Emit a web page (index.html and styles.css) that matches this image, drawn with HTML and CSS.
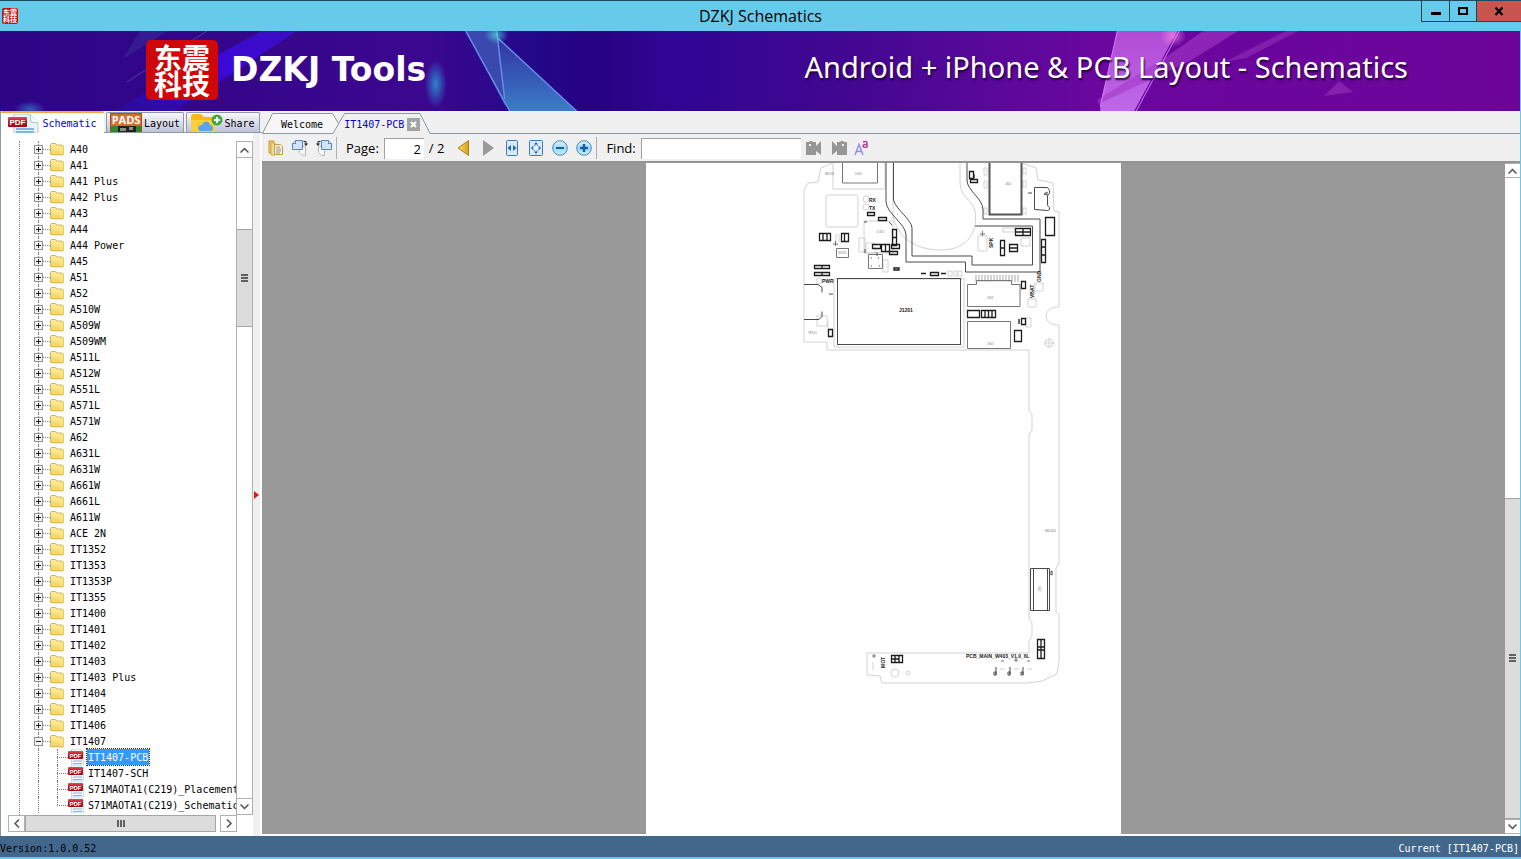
FILE: index.html
```html
<!DOCTYPE html>
<html lang="en">
<head>
<meta charset="utf-8">
<title>DZKJ Schematics</title>
<link rel="stylesheet" href="styles.css">
</head>
<body>
<svg class="defs" aria-hidden="true">
  <defs>
    <linearGradient id="gFolder" x1="0" y1="0" x2="0" y2="1"><stop offset="0" stop-color="#fff3a8"/><stop offset="1" stop-color="#f5cf5c"/></linearGradient>
    <linearGradient id="gBlue" x1="0" y1="0" x2="0" y2="1"><stop offset="0" stop-color="#e4f5fc"/><stop offset=".5" stop-color="#9bd9f5"/><stop offset="1" stop-color="#c5effc"/></linearGradient>
    <linearGradient id="gGold" x1="0" y1="0" x2="1" y2="0"><stop offset="0" stop-color="#f8e060"/><stop offset="1" stop-color="#d8a020"/></linearGradient>
    <linearGradient id="gRed" x1="0" y1="0" x2="0" y2="1"><stop offset="0" stop-color="#d8505a"/><stop offset=".5" stop-color="#b8101c"/><stop offset="1" stop-color="#a00814"/></linearGradient>
  </defs>
  <symbol id="folder" viewBox="0 0 14 13"><path d="M.5 11.5V1.5l1-1h4l1 1.500h5.500l1 1v9z" fill="url(#gFolder)" stroke="#d9b04a"/><path d="M10.500 2.500h3v9h-3" fill="#fbe48a" stroke="#e0b955" stroke-width=".6"/></symbol>
  <symbol id="pdf" viewBox="0 0 16 16"><path d="M3.500 0h9l3 3v13h-12z" fill="#f2f8fd" stroke="#b5cfe4" stroke-width=".8"/><path d="M5 12h9M5 14.500h9" stroke="#7fbbe6" stroke-width="1.200"/><rect x="0" y="2" width="15" height="8" rx="1" fill="url(#gRed)"/><text x="7.500" y="8.500" text-anchor="middle" class="pdf-text">PDF</text></symbol>
</svg>

<header class="titlebar">
  <div class="app-icon"><span>东震</span><span>科技</span></div>
  <h1 class="title">DZKJ Schematics</h1>
  <div class="win-buttons">
    <button class="win-btn win-min" aria-label="Minimize"><svg width="10" height="10"><rect y="6" width="10" height="3"/></svg></button>
    <button class="win-btn win-max" aria-label="Maximize"><svg width="10" height="10"><path d="M1 2h8v6h-8z" fill="none" stroke="#000" stroke-width="2"/></svg></button>
    <button class="win-btn win-close" aria-label="Close"><svg width="10" height="10"><path d="M1.500 1.500l7 7.500M8.500 1.500l-7 7.500" stroke="#000" stroke-width="2.200"/></svg></button>
  </div>
</header>

<section class="banner">
  <svg class="banner-art" viewBox="0 31 1521 80" preserveAspectRatio="none" aria-hidden="true">
    <defs>
      <linearGradient id="bBase"><stop offset="0" stop-color="#2d0585"/><stop offset=".28" stop-color="#3b078f"/><stop offset=".35" stop-color="#22088a"/><stop offset=".39" stop-color="#270281"/><stop offset=".45" stop-color="#310594"/><stop offset=".56" stop-color="#420791"/><stop offset=".65" stop-color="#59089a"/><stop offset=".72" stop-color="#6a079f"/><stop offset="1" stop-color="#6c0499"/></linearGradient>
      <linearGradient id="bStripe" x1="0" y1="1" x2="1" y2="0"><stop offset="0" stop-color="#2a0a99"/><stop offset=".6" stop-color="#3c09d8"/><stop offset="1" stop-color="#3d0cc0"/></linearGradient>
      <linearGradient id="bShard" x1="0" y1="0" x2="0" y2="1"><stop offset="0" stop-color="#31309f"/><stop offset="1" stop-color="#3a7cc8"/></linearGradient>
      <linearGradient id="bPink" x1="0" y1="0" x2="0" y2="1"><stop offset="0" stop-color="#b24bd4"/><stop offset="1" stop-color="#be68ea"/></linearGradient>
      <radialGradient id="bGlow"><stop offset="0" stop-color="#2f83cc"/><stop offset="1" stop-color="#2f83cc" stop-opacity="0"/></radialGradient>
      <radialGradient id="bSpark"><stop offset="0" stop-color="#51dfe0"/><stop offset="1" stop-color="#51dfe0" stop-opacity="0"/></radialGradient>
      <radialGradient id="bSpark2"><stop offset="0" stop-color="#f78be8"/><stop offset="1" stop-color="#f78be8" stop-opacity="0"/></radialGradient>
    </defs>
    <rect y="31" width="1521" height="80" fill="url(#bBase)"/>
    <path d="M262 31h35L175 111h-62z" fill="url(#bStripe)"/>
    <path d="M140 31h28l-45 28z" fill="#38309c" opacity=".5"/>
    <path d="M207 31L127 82" stroke="#5460be" opacity=".6"/>
    <ellipse cx="30" cy="109" rx="16" ry="8" fill="url(#bGlow)" opacity=".7"/>
    <ellipse cx="436" cy="84" rx="11" ry="24" fill="url(#bGlow)"/>
    <path d="M466 31h31l9 76z" fill="#3b48ae"/>
    <path d="M497 36l80 75h-67l-5-10z" fill="url(#bShard)"/>
    <path d="M466 31l44 80M497 31l8 68M497 37l80 74" fill="none" stroke="#668be8" stroke-width="1.500"/>
    <ellipse cx="497" cy="35" rx="12" ry="9" fill="url(#bSpark)" opacity=".7"/>
    <path d="M650 31l60 0 0 80-60 0z" fill="#310599" opacity=".3"/>
    <path d="M1118 31h60l-43 80h-34v-7z" fill="url(#bPink)"/>
    <path d="M1204 31h35l-50 31-90 42-1-4 70-44z" fill="#a33ac6" opacity=".6"/>
    <path d="M1287 31h12l-52 27-22 4z" fill="#8c2ab1" opacity=".7"/>
    <path d="M1340 81l-15 15 29-4z" fill="#8420ac"/>
    <path d="M1118 31l-17 76M1180 31l-43 80" stroke="#d17af5" fill="none"/>
    <ellipse cx="1174" cy="36" rx="13" ry="11" fill="url(#bSpark2)" opacity=".7"/>
  </svg>
  <div class="logo"><span>东震</span><span>科技</span></div>
  <span class="brand">DZKJ Tools</span>
  <span class="tagline">Android + iPhone &amp; PCB Layout - Schematics</span>
</section>

<main class="main">
  <aside class="side">
    <nav class="side-tabs">
      <button class="side-tab is-active"><svg width="32" height="19" viewBox="0 0 32 19"><path d="M6 0h16l8 9v10H6z" fill="#edf4f9" stroke="#b9c9d6"/><path d="M22 0l1 8 7 1" fill="#fff" stroke="#a9bccb"/><path d="M8 15h18M8 18h18" stroke="#7ab8e4" stroke-width="2"/><rect x="0" y="3" width="19" height="10" rx="1" fill="url(#gRed)"/><text x="9.500" y="11" text-anchor="middle" class="pdf-tab-text">PDF</text></svg><span>Schematic</span></button>
      <button class="side-tab"><svg width="32" height="19" viewBox="0 0 32 19"><rect x=".5" y=".5" width="31" height="19" fill="#d4702a" stroke="#a3501c"/><path d="M1 13h30v6H1z" fill="#2c8a2c"/><rect x="8" y="13" width="18" height="6" fill="#222"/><path d="M10 15h6v3h-6zM19 14h4v3h-4z" fill="#8a918a"/><text x="16" y="11" text-anchor="middle" class="pads-text">PADS</text></svg><span>Layout</span></button>
      <button class="side-tab tab-share"><svg width="32" height="18" viewBox="0 0 32 18"><path d="M0 18V3q0-3 3-3h7l3 3h8q3 0 3 3v12z" fill="#fbb917"/><path d="M0 6h24v12H0z" fill="#ffce3c"/><path d="M10 17q-3 0-3-3t4-3q2-5 6-3 2 1 2 3 3 0 3 3t-3 3z" fill="#58a5e8"/><circle cx="26" cy="6" r="5.500" fill="#42a843"/><path d="M26 3v6M23 6h6" stroke="#fff" stroke-width="2"/></svg><span>Share</span></button>
    </nav>
    <div class="side-body">
      <div class="tree-wrap">
        <ul class="tree" id="tree"></ul>
        <div class="vbar">
          <button class="sb-btn" aria-label="Scroll up"><svg width="9" height="6"><path d="M.5 5.500l4-4 4 4"/></svg></button>
          <div class="track"><div class="pre"></div><div class="thumb"><i class="grip"></i></div><div class="post"></div></div>
          <button class="sb-btn" aria-label="Scroll down"><svg width="9" height="6"><path d="M.5 .500l4 4 4-4"/></svg></button>
        </div>
      </div>
      <div class="hbar">
        <button class="sb-btn" aria-label="Scroll left"><svg width="6" height="9"><path d="M5 .500l-4 4 4 4"/></svg></button>
        <div class="hthumb"><i class="grip grip-h"></i></div>
        <button class="sb-btn" aria-label="Scroll right"><svg width="6" height="9"><path d="M1 .500l4 4-4 4"/></svg></button>
      </div>
    </div>
    <div class="splitter"><svg width="5" height="8"><path d="M0 0l5 4-5 4z" fill="#d81c1c"/></svg></div>
  </aside>

  <section class="doc">
    <nav class="doc-tabs">
      <svg class="tab-lines" height="24" aria-hidden="true"><path d="M10.500 2.500h60l6 10-5 10H.5z" fill="#f6f6f6"/><path d="M0 23.500L10.500 2.500H70.500l6 10M0 22.500h71L82.500 2.500H158l10 20H4000" fill="none" stroke="#8b9aa5"/></svg>
      <button class="doc-tab">Welcome</button>
      <button class="doc-tab is-current">IT1407-PCB</button>
      <button class="tab-close" aria-label="Close tab"><svg width="13" height="13"><path d="M4 4l5 5M9 4l-5 5" stroke="#fff" stroke-width="2"/></svg></button>
    </nav>
    <div class="toolbar">
      <button class="tool" aria-label="Open"><svg width="16" height="16"><path d="M1 1h5v12H1z" fill="#f2c968" stroke="#c59a3a"/><path d="M3 3h4v12H3z" fill="#f8db90" stroke="#d2a645"/><path d="M6.500 4.500h6l2 2v8h-8z" fill="#fff8e3" stroke="#c59a3a"/><path d="M8 7h4M8 9h5M8 11h5M8 13h4" stroke="#8b8f98"/></svg></button>
      <button class="tool" aria-label="Rotate right"><svg width="16" height="16"><path d="M7.500 6.500h6v9h-3l-3-3z" fill="#fff" stroke="#b5b5b5"/><path d="M3.500.5h7v9H.5v-6z" fill="#cfe5fa" stroke="#5583bd"/><path d="M.5 3.500h3v-3" fill="#fff" stroke="#5583bd"/><path d="M11.500 1.500H14v3" fill="none" stroke="#222"/><path d="M12 3.500h4L14 6z" fill="#222"/></svg></button>
      <button class="tool" aria-label="Rotate left"><svg width="16" height="16"><path d="M2.500 6.500h6v9h-3l-3-3z" fill="#fff" stroke="#b5b5b5"/><path d="M5.500.5h7l3 3v6h-10z" fill="#cfe5fa" stroke="#5583bd"/><path d="M12.500.5v3h3" fill="#fff" stroke="#5583bd"/><path d="M4.500 1.500H2v3" fill="none" stroke="#222"/><path d="M0 3.500h4L2 6z" fill="#222"/></svg></button>
      <span class="sep"></span>
      <label class="tb-label" for="page">Page:</label>
      <input class="field page-field" id="page" value="2">
      <span class="page-total">/ 2</span>
      <button class="tool" aria-label="Previous page"><svg width="16" height="16"><path d="M12.500 .5v15L2 8z" fill="url(#gGold)" stroke="#b07f18"/></svg></button>
      <button class="tool" aria-label="Next page"><svg width="16" height="16"><path d="M3 0v16l11-8z" fill="#999"/></svg></button>
      <button class="tool" aria-label="Fit width"><svg width="16" height="16"><rect x="2.500" y=".5" width="11" height="15" rx="1" fill="#d7eafb" stroke="#4079b5"/><path d="M7 5v6L3.500 8zM9 5v6l3.500-3z" fill="#1f6bad"/></svg></button>
      <button class="tool" aria-label="Fit page"><svg width="16" height="16"><rect x="1.500" y=".5" width="13" height="15" rx="1" fill="#d7eafb" stroke="#4079b5"/><path d="M8 2l2 2.500H6zM8 14l2-2.500H6zM3 8l2-2v4zM13 8l-2-2v4z" fill="#1f6bad"/><circle cx="8" cy="8" r="3" fill="#e9f5fe" stroke="#4a8ac6" stroke-dasharray="2 1"/></svg></button>
      <button class="tool" aria-label="Zoom out"><svg width="16" height="16"><circle cx="8" cy="8" r="7.300" fill="url(#gBlue)" stroke="#4d86bf"/><path d="M4 8h8" stroke="#155fa0" stroke-width="2"/></svg></button>
      <button class="tool" aria-label="Zoom in"><svg width="16" height="16"><circle cx="8" cy="8" r="7.300" fill="url(#gBlue)" stroke="#4d86bf"/><path d="M4 8h8M8 4v8" stroke="#155fa0" stroke-width="2.400"/></svg></button>
      <span class="sep"></span>
      <label class="tb-label" for="find">Find:</label>
      <input class="field find-field" id="find">
      <button class="tool tool-find" aria-label="Find previous"><svg width="16" height="16"><path d="M0 2h3l1-1h2l1 1h3v4l5-5v14l-5-4v4H0z" fill="#969696"/><path d="M3 4h2v2H3z" fill="#eee"/></svg></button>
      <button class="tool tool-find" aria-label="Find next"><svg width="16" height="16"><path d="M16 2h-3l-1-1h-2l-1 1H6v4L1 1v14l5-4v4h10z" fill="#969696"/><path d="M11 4h2v2h-2z" fill="#eee"/></svg></button>
      <button class="tool tool-case" aria-label="Match case"><svg width="16" height="16"><path d="M1 15L5 4.500 9 15M2.500 11.500h5" fill="none" stroke="#8f8af2" stroke-width="1.400"/><path d="M9 2q4-1.500 4 1v4.500M13 4.500q-4-.5-4 1.500t4 1" fill="none" stroke="#b83c9c" stroke-width="1.500"/></svg></button>
    </div>
    <div class="viewer">
      <div class="canvas">
        <div class="sheet">
          <svg class="pcb" width="475" height="671" viewBox="646 163 475 671">
            <g class="faint">
              <path d="M833 163l-12 5-3 14-10 1-4 7v152h23v8h202v61l3 3v17l-3 3v185l3 4v13l-3 5v12H867v22l13 1 2 7h145l15-2 15-7 2-13v-47l-3-2v-44l3-5V325c-17 1-17-19 0-18v-95l-5-1-1-28-15-3-2-12-14-5"/>
              <path d="M833 163v26h52v-26M893 163v52c3 22 23 35 47 35s32-12 35-25c4-30-15-20-15-45v-17"/>
              <rect x="826" y="195" width="32" height="32" rx="2"/><path d="M834 279v68h130v-69M834 279h130"/>
              <circle cx="866" cy="199" r="3"/><circle cx="866" cy="207" r="3"/><circle cx="819" cy="281" r="3"/>
              <path d="M864 221h29v32h-29zM859 238h6v14h-6zM866 243h9v10h-9zM883 260h5v12h-5zM817 316h10v10h-10zM828 321v12"/>
              <path d="M984 168h3v7h-3zM984 181h3v7h-3zM984 208h3v6h-3zM1023 168h3v6h-3zM1023 181h3v6h-3zM1023 208h3v6h-3z"/>
              <path d="M978 236h9v15h-9zM1003 228h12v4h-12zM1021 238h9v8h-9zM1035 283h8v8h-8zM1028 299h8v8h-8zM1026 318h5v9h-5z"/>
              <circle cx="1049" cy="343" r="4"/><path d="M1044 343h11M1049 338v10"/>
              <circle cx="895" cy="673" r="4"/><circle cx="908" cy="673" r="2"/><path d="M873 662v8M1000 669h5M1014 669h5M1027 669h5"/>
              <path d="M948 271h4v5h-4zM954 271h3v5h-3zM958 271h4v5h-4zM836 234v8M839 234v8"/>
              <path d="M975 277h45M975 280h45" stroke-width="4" stroke-dasharray="2 1"/>
            </g>
            <g class="mid">
              <path d="M842.500 160v23h35v-23M836.500 248.500h12v9h-12zM868.500 254.500h14v14h-14z"/>
              <path d="M989.500 160v54.500h32V160" class="heavy"/>
              <path d="M967.500 306.500v-22h9v-4h35v4h8.500v22zM967.500 321.500h43v27h-43z"/>
              <path d="M833 244h5M835.500 241v5M980 234h5M982.500 231v5M872 656h4M874 654v4M1001 661h3M1014 660h4M1016 658v4M1027 661h3"/>
            </g>
            <g class="dark">
              <path d="M1034.500 187.500h13l2 3v3l-2 2v10l2 2v2l-2 1-13-1zM1044 194l3-2v3z"/>
              <path d="M886 163v39c1 12 20 22 20 33v27h59.500v10H1040v-53h-57v-9c0-12-16-19-16-30v-17"/>
              <path d="M893.500 163v37c2 9 18.500 20 18.500 28v28h60v9h60.500v-39H975"/>
              <rect x="837.500" y="278.500" width="123" height="66"/>
              <path d="M804 284.500h14l4 3v5M804 319.500h15l3-3v-5M829 294h4M1028 193h4"/>
              <path d="M1030.500 568.500h19v42h-19zM1033.500 568v42M1047.500 568v42"/>
              <path d="M1052 571v4l-3-2zM996 667v8M1010 667v8M1023 667v8M994 672h2v3h-2zM1008 672h2v3h-2zM1021 672h2v3h-2z"/>
              <path d="M864 222h3M889 222l3 3M865 249v4M877 256v-4M871 258h1M878 258h1M871 266h1M879 266h1"/>
            </g>
            <g class="part">
              <path d="M819.500 233.500h11v7h-11zM823 233v8M827 233v8M841.500 233.500h7v8h-7zM844.500 233v8"/>
              <path d="M867.500 212.500h7v3h-7zM878.500 217.500h8v3h-8zM892.500 229.500h4v16h-4zM892 237.500h5M872.500 244.500h8v4h-8zM881.500 244.500h8v7h-8zM885.500 244v8M891.500 244.500h8v4h-8zM889.500 251.500h8v3h-8z"/>
              <path d="M814.500 265.500h15v3h-15zM822 265v4M814.500 272.500h15v3h-15zM822 272v4M828.500 329.500h4v7h-4z"/>
              <path d="M894 268h5v2h-5zM921 273.500h5M930.500 272.500h8v3h-8zM941 273.500h5"/>
              <path d="M969.500 171.500h4v7h-4zM970.500 179.500h7v3h-7zM974 174v4"/>
              <path d="M1015.500 228.500h15v7h-15zM1015 232h16M1023 228v8M1000.500 240.500h4v15h-4zM1000 248h5M1009.500 244.500h8v7h-8zM1009 248h9"/>
              <path d="M1045.500 217.500h9v18h-9zM1041.500 239.500h4v23h-4zM1041 247h5M1041 255h5M1021.500 281.500h4v7h-4z"/>
              <path d="M967.500 310.500h12v7h-12zM981.500 310.500h14v7h-14zM985 310v8M988.500 310v8M992 310v8M1021.500 318.500h4v6h-4zM1019 319v5M1014.500 330.500h7v11h-7z"/>
              <path d="M1037.500 639.500h7v19h-7zM1041 639v19M1037 647h8M1037 650h8M891.500 655.500h11v7h-11zM895 655v8M899 655v8M892 659h7"/>
            </g>
            <g class="pcb-text">
              <text x="899" y="312">J1201</text><text x="869" y="202">RX</text><text x="869" y="210">TX</text><text x="822" y="283">PWR</text>
              <text x="966" y="658">PCB_MAIN_W403_V1.0_6L</text>
              <text transform="translate(993 248) rotate(-90)">SPK</text><text transform="translate(1041 282) rotate(-90)">GND</text><text transform="translate(1034 298) rotate(-90)">VBAT</text><text transform="translate(885 668) rotate(-90)">MOT</text>
            </g>
            <g class="pcb-tiny"><text x="855" y="175">U201</text><text x="825" y="175">MK101</text><text x="877" y="233">U701</text><text x="1005" y="185">J401</text><text x="987" y="299">J301</text><text x="987" y="345">J302</text><text x="838" y="254">X0701</text><text x="808" y="334">TP101</text><text x="1045" y="532">MK1001</text><text transform="translate(1041 592) rotate(-90)">J101</text></g>
          </svg>
        </div>
      </div>
      <div class="vbar vbar-doc">
        <button class="sb-btn" aria-label="Page up"><svg width="9" height="6"><path d="M.5 5.500l4-4 4 4"/></svg></button>
        <div class="track"><div class="pre"></div><div class="thumb"><i class="grip"></i></div></div>
        <button class="sb-btn" aria-label="Page down"><svg width="9" height="6"><path d="M.5 .500l4 4 4-4"/></svg></button>
      </div>
    </div>
  </section>
</main>

<footer class="status"><span>Version:1.0.0.52</span><span class="status-doc">Current [IT1407-PCB]</span></footer>
<script src="tree.js"></script>
</body>
</html>
```

FILE: styles.css
```css
* { box-sizing: border-box; }
body {
  margin: 0; height: 100vh; display: flex; flex-direction: column; overflow: hidden;
  background: #f0f0f0; color: #000;
  font: 10px/16px "DejaVu Sans Mono", "Liberation Mono", monospace;
}
button { font: inherit; color: inherit; padding: 0; margin: 0; border: 0; background: none; display: flex; align-items: center; justify-content: center; }
svg { display: block; flex: none; }
.defs { position: absolute; width: 0; height: 0; }

/* title bar */
.titlebar { flex: none; height: 31px; display: grid; grid-template-columns: 100px 1fr 100px; align-items: center; background: #66cbea; border-top: 1px solid #1b4a5e; }
.app-icon { width: 16px; height: 16px; margin-left: 2px; padding: 1px; border-radius: 2px; background: #cc0a0c; color: #fff; font: 700 7px/7px "Noto Sans CJK SC", sans-serif; }
.app-icon span { display: block; }
.title { margin: 0; text-align: center; font: 400 16px/20px "Open Sans", "Noto Sans", sans-serif; }
.win-buttons { display: flex; justify-self: end; align-self: start; }
.win-btn { height: 21px; border: solid #25424e; border-width: 0 0 1px 1px; }
.win-min { width: 28px; }
.win-max { width: 27px; }
.win-close { width: 45px; background: #c75650; }

/* banner */
.banner { flex: none; height: 80px; position: relative; display: flex; align-items: center; padding: 0 112px 2px 146px; background: #6c0499; color: #fff; border-right: 1px solid #66cbea; }
.banner-art { position: absolute; inset: 0; width: 100%; height: 100%; }
.logo, .brand, .tagline { position: relative; }
.logo { width: 72px; height: 60px; padding: 4px 0; border-radius: 5px; background: #cf0708; text-align: center; font: 700 28px/26px "Noto Sans CJK SC", sans-serif; }
.logo span { display: block; }
.brand { margin-left: 13px; font: 700 33px/40px "DejaVu Sans", sans-serif; }
.tagline { margin: 0 0 6px auto; font: 400 29px/36px "Noto Sans", sans-serif; text-shadow: 1px 2px 2px #20003c; white-space: nowrap; }

/* layout */
.main { flex: 1; min-height: 0; display: flex; border-right: 1px solid #66cbea; }
.side { flex: none; width: 262px; display: grid; grid-template: 22px 1fr / 1fr 9px; border-left: 1px solid #8b9aa5; }
.side-tabs { grid-column: 1 / 3; display: flex; gap: 2px; align-items: flex-end; border-bottom: 1px solid #8b9aa5; background: #f0f0f0; }
.side-tab { height: 20px; width: 78px; gap: 2px; border: 1px solid #8b9aa5; border-bottom: 0; border-radius: 2px 2px 0 0; background: linear-gradient(#f8f8fb, #bfc3da); }
.side-tab span { padding-top: 2px; }
.tab-share { width: 74px; gap: 1px; }
.side-tab.is-active { height: 22px; width: 103px; border: 0; border-top: 2px solid #f5a83c; background: #fff; color: #0000c8; margin-bottom: -1px; }
.side-body { min-width: 0; min-height: 0; display: flex; flex-direction: column; padding: 8px 0 4px 7px; background: #fff; }
.tree-wrap { flex: 1; min-height: 0; display: flex; }
.tree { flex: 1; min-width: 0; margin: 0; padding: 0 0 0 26px; list-style: none; overflow: hidden; position: relative; }
.tree::before { content: ""; position: absolute; left: 11px; top: 0; bottom: 0; border-left: 1px dotted #808080; }
.node { height: 16px; display: flex; align-items: center; white-space: nowrap; position: relative; }
.node > * { flex: none; }
.node::before { content: ""; position: absolute; left: 4px; top: 0; bottom: 0; border-left: 1px dotted #808080; }
.expander { position: relative; width: 9px; height: 9px; border: 1px solid #919191; background: #f0f0f0; }
.expander::before { content: ""; position: absolute; left: 1px; top: 3px; width: 5px; height: 1px; background: #222; }
.expander.is-closed::after { content: ""; position: absolute; left: 3px; top: 1px; width: 1px; height: 5px; background: #222; }
.link { width: 7px; border-top: 1px dotted #808080; }
.node-label { height: 16px; margin-left: 4px; padding: 1px 2px 0; }
.leaf { padding-left: 23px; }
.leaf::after { content: ""; position: absolute; left: 23px; top: 0; bottom: 0; border-left: 1px dotted #808080; }
.leaf.is-last::after { bottom: 8px; }
.leaf .link { width: 11px; }
.leaf .node-label { margin-left: 3px; padding: 1px 1px 0; }
.node-label.is-selected { background: #3399ff; color: #fff; outline: 1px dotted #40301a; }
.pdf-text { font: 700 6px "Liberation Sans", sans-serif; fill: #fff; }
.pdf-tab-text { font: 700 8px "Liberation Sans", sans-serif; fill: #fff; }
.pads-text { font: 700 11px "Open Sans", sans-serif; fill: #fff; }
.splitter { display: flex; align-items: center; padding: 20px 0 0 1px; background: #f0f0f0; border-right: 2px solid #fff; }

/* scroll bars */
.sb-btn { flex: none; background: #fff; border: 1px solid #b0b0b0; width: 17px; height: 17px; }
.sb-btn path { fill: none; stroke: #505050; stroke-width: 1.5; }
.vbar { flex: none; width: 17px; display: flex; flex-direction: column; }
.track { flex: 1; min-height: 0; display: flex; flex-direction: column; border: solid #b0b0b0; border-width: 0 1px; background: #fff; }
.pre { flex: 71; }
.thumb { flex: 97; display: flex; align-items: center; justify-content: center; background: #dcdcdc; border: solid #a5a5a5; border-width: 1px 0; }
.post { flex: 472; }
.grip { width: 7px; height: 8px; background: repeating-linear-gradient(#606060 0 2px, transparent 2px 3px); }
.grip-h { width: 8px; height: 7px; background: repeating-linear-gradient(90deg, #606060 0 2px, transparent 2px 3px); }
.hbar { flex: none; display: flex; margin-right: 16px; height: 17px; }
.hthumb { flex: 1; display: flex; align-items: center; justify-content: center; background: #dcdcdc; border: 1px solid #a5a5a5; margin-right: 4px; }

/* document */
.doc { flex: 1; min-width: 0; display: flex; flex-direction: column; }
.doc-tabs { flex: none; height: 23px; position: relative; display: flex; align-items: center; padding: 4px 0 0 19px; overflow: hidden; }
.tab-lines { position: absolute; left: 0; top: 0; width: 100%; }
.doc-tab { position: relative; height: 18px; }
.doc-tab.is-current { margin-left: 21px; color: #0000c8; }
.tab-close { position: relative; margin-left: 3px; background: #a3a3a3; }
.toolbar { flex: none; height: 29px; display: flex; align-items: center; gap: 8px; padding: 1px 6px 0; background: #f0f0f0; border-bottom: 2px solid #939393; font: 13px/18px "Open Sans", "Noto Sans", sans-serif; }
.tool { width: 16px; height: 18px; }
.sep { width: 1px; height: 22px; background: #aab0b5; margin: 0 0 0 -4px; }
.sep + .tb-label { margin-left: 1px; }
.field { height: 21px; border: solid #a0a0a0; border-width: 1px 0 0 1px; background: #fff; font: inherit; padding: 0 3px; margin: 0 -3px; }
.page-field { width: 40px; text-align: right; }
.find-field { width: 160px; }
.page-total { margin-right: 4px; }
.tool-find { margin-right: 1px; }
.tool-case { margin-left: -2px; }
.viewer { flex: 1; min-height: 0; display: flex; background: #fff; padding-bottom: 2px; }
.canvas { flex: 1; min-width: 0; display: flex; justify-content: center; background: #999; overflow: hidden; }
.sheet { background: #fff; }
.vbar-doc { width: 15px; }
.vbar-doc .sb-btn { width: 15px; height: 15px; border-width: 1px 0; }
.vbar-doc .track { border: 0; }
.vbar-doc .pre, .vbar-doc .thumb { flex: 1; }

/* board drawing */
.faint, .mid, .dark, .part { fill: none; }
.faint { stroke: #d2d2d2; stroke-width: 1; }
.mid { stroke: #777; stroke-width: 1; }
.heavy { stroke: #555; stroke-width: 2; }
.dark { stroke: #4a4a4a; stroke-width: 1; }
.part { stroke: #1c1c1c; stroke-width: 1.3; }
.pcb-text { font: 700 5px "Liberation Sans", sans-serif; fill: #222; }
.pcb-tiny { font: 3px "Liberation Sans", sans-serif; fill: #777; }

/* status bar */
.status { flex: none; height: 23px; display: flex; align-items: center; justify-content: space-between; padding: 5px 2px 0 0; background: #42678b; border-bottom: 2px solid #66cbea; }
.status-doc { color: #fff; }
```

FILE: tree.js
```js
const folders = ["A40", "A41", "A41 Plus", "A42 Plus", "A43", "A44", "A44 Power", "A45", "A51", "A52",
  "A510W", "A509W", "A509WM", "A511L", "A512W", "A551L", "A571L", "A571W", "A62", "A631L", "A631W",
  "A661W", "A661L", "A611W", "ACE 2N", "IT1352", "IT1353", "IT1353P", "IT1355", "IT1400", "IT1401",
  "IT1402", "IT1403", "IT1403 Plus", "IT1404", "IT1405", "IT1406", "IT1407"];
const files = ["IT1407-PCB", "IT1407-SCH", "S71MAOTA1(C219)_Placement", "S71MAOTA1(C219)_Schematic"];
const open = "IT1407";
const selected = "IT1407-PCB";

const folderRow = (name) => `<li class="node">
  <button class="expander ${name === open ? "" : "is-closed"}" aria-label="Toggle ${name}"></button><i class="link"></i>
  <svg width="14" height="13"><use href="#folder"/></svg><span class="node-label">${name}</span></li>`;

const fileRow = (name, i) => `<li class="node leaf ${i === files.length - 1 ? "is-last" : ""}"><i class="link"></i>
  <svg width="16" height="16"><use href="#pdf"/></svg>
  <span class="node-label ${name === selected ? "is-selected" : ""}">${name}</span></li>`;

document.getElementById("tree").innerHTML = folders.map(folderRow).join("") + files.map(fileRow).join("");
```
